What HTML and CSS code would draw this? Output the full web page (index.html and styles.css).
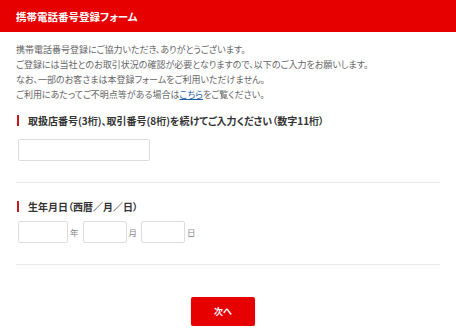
FILE: index.html
```html
<!DOCTYPE html>
<html lang="ja">
<head>
    <meta charset="UTF-8">
    <meta name="viewport" content="width=device-width, initial-scale=1.0">
    <title>携帯電話番号登録フォーム</title>
    <link rel="stylesheet" href="styles.css">
</head>
<body>
    <header class="page-header">
        <h1 class="page-title">携帯電話番号登録フォーム</h1>
    </header>

    <main class="content">
        <p class="intro">
            携帯電話番号登録にご協力いただき、ありがとうございます。<br>
            ご登録には当社とのお取引状況の確認が必要となりますので、以下のご入力をお願いします。<br>
            なお、一部のお客さまは本登録フォームをご利用いただけません。<br>
            ご利用にあたってご不明点等がある場合は<a href="#" class="link">こちら</a>をご覧ください。
        </p>

        <section class="field">
            <h2 class="field-label">取扱店番号(3桁)、取引番号(8桁)を続けてご入力ください（数字11桁）</h2>
            <input type="text" class="text-input account-input">
        </section>

        <section class="field">
            <h2 class="field-label">生年月日（西暦／月／日）</h2>
            <div class="date-row">
                <input type="text" class="text-input year-input">
                <span class="unit">年</span>
                <input type="text" class="text-input md-input">
                <span class="unit">月</span>
                <input type="text" class="text-input md-input">
                <span class="unit">日</span>
            </div>
        </section>

        <div class="actions">
            <button class="next-btn">次へ</button>
        </div>
    </main>
</body>
</html>
```

FILE: styles.css
```css
body {
    margin: 0;
    font-family: "Noto Sans CJK JP", "Noto Sans", sans-serif;
    background-color: #ffffff;
    color: #666666;
}

/* ヘッダー */
.page-header {
    height: 32px;
    display: flex;
    align-items: center;
    padding: 0 16px;
    background-color: #e60000;
}

.page-title {
    margin: 0;
    font-size: 10.5px;
    font-weight: bold;
    color: #ffffff;
    font-feature-settings: "palt";
}

.content {
    padding: 0 16px;
}

.intro {
    margin: 10px 0 0;
    font-size: 9px;
    line-height: 15px;
    font-feature-settings: "palt";
}

.link {
    color: #1f5fa8;
}

/* 入力欄 */
.field {
    padding: 13px 0 21px;
    border-bottom: 1px solid #ebebeb;
}

.field + .field {
    padding-top: 18px;
}

.field-label {
    margin: 0 0 9px 1px;
    padding-left: 9px;
    border-left: 2px solid #c8161d;
    font-size: 10px;
    line-height: 11px;
    font-weight: bold;
    color: #333333;
    font-feature-settings: "palt";
}

.field + .field .field-label {
    margin-bottom: 9px;
}

.text-input {
    box-sizing: border-box;
    height: 22px;
    margin: 0 0 0 2px;
    padding: 0 4px;
    border: 1px solid #dddddd;
    border-radius: 2px;
    background: #ffffff;
}

.account-input {
    width: 132px;
}

.date-row {
    display: flex;
    align-items: center;
}

.year-input {
    width: 50px;
}

.md-input {
    width: 44px;
}

.date-row .md-input {
    margin-left: 0;
}

.unit {
    font-size: 8.5px;
    color: #888888;
    padding: 0 4px 0 2px;
}

/* ボタン */
.actions {
    display: flex;
    justify-content: center;
    padding: 32px 10px 0 0;
}

.next-btn {
    width: 64px;
    height: 29px;
    border: none;
    border-radius: 2px;
    background-color: #e60000;
    color: #ffffff;
    font-family: inherit;
    font-size: 9px;
    font-weight: bold;
    cursor: pointer;
    box-shadow: 0 1px 2px rgba(0,0,0,0.2);
}
```
